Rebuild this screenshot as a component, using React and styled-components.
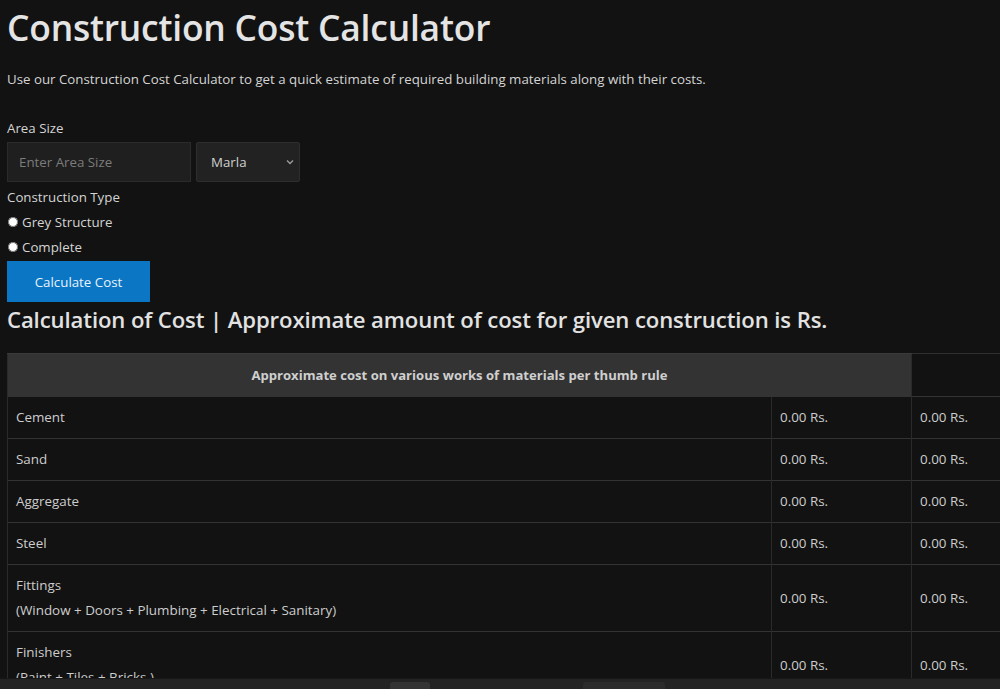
import React from "react";
import styled, { createGlobalStyle } from "styled-components";

const GlobalStyle = createGlobalStyle`
  html, body {
    margin: 0;
    padding: 0;
    background: #121212;
    overflow: hidden;
  }
  body {
    font-family: "Open Sans", "Noto Sans", sans-serif;
    color: #d6d6d6;
  }
`;

const Page = styled.div`
  padding: 0 0 0 7px;
  width: 1100px;
`;

const Title = styled.h1`
  margin: 5px 0 0;
  font-size: 35.4px;
  font-weight: 600;
  line-height: 44px;
  color: #e4e4e4;
  letter-spacing: -0.2px;
`;

const Intro = styled.p`
  margin: 20px 0 0;
  font-size: 13.3px;
  line-height: 20px;
  color: #d4d4d4;
`;

const Label = styled.div`
  margin-top: ${(p) => p.top || 0}px;
  font-size: 13.3px;
  line-height: 20px;
  color: #d4d4d4;
`;

const FieldRow = styled.div`
  display: flex;
  gap: 5px;
  margin-top: 4px;
`;

const TextInput = styled.input`
  box-sizing: border-box;
  width: 184px;
  height: 40px;
  padding: 0 11px;
  background: #1f1f1f;
  border: 1px solid #2b2b2b;
  color: #ddd;
  font-family: inherit;
  font-size: 13.3px;
  outline: none;

  &::placeholder {
    color: #7c7c7c;
  }
`;

const SelectWrap = styled.div`
  position: relative;
  width: 104px;
  height: 40px;
`;

const Select = styled.select`
  appearance: none;
  box-sizing: border-box;
  width: 100%;
  height: 100%;
  padding: 0 14px;
  background: #222222;
  border: 1px solid #2e2e2e;
  border-radius: 2px;
  color: #cfcfcf;
  font-family: inherit;
  font-size: 13.3px;
  outline: none;
`;

const Chevron = styled.svg`
  position: absolute;
  right: 6px;
  top: 17px;
  pointer-events: none;
`;

const RadioGroup = styled.div`
  margin-top: 2px;
`;

const RadioRow = styled.label`
  display: flex;
  align-items: center;
  height: 25px;
  font-size: 13.3px;
  color: #d4d4d4;

  input {
    margin: 0 4px 0 1px;
    width: 10px;
    height: 10px;
    accent-color: #ffffff;
  }
`;

const Button = styled.button`
  display: block;
  width: 143px;
  height: 41px;
  margin-top: 2px;
  background: #0a76c4;
  border: none;
  color: #e8f2fb;
  font-family: inherit;
  font-size: 13.3px;
  cursor: pointer;
`;

const Subtitle = styled.h3`
  margin: 2px 0 0;
  font-size: 22.1px;
  font-weight: 600;
  line-height: 30px;
  color: #e2e2e2;
  letter-spacing: -0.1px;
`;

const Table = styled.table`
  margin-top: 19px;
  border-collapse: collapse;
  width: 1050px;
  font-size: 13.4px;
  color: #cdcdcd;
`;

const HeadCell = styled.th`
  height: 42px;
  padding: 0;
  background: ${(p) => (p.empty ? "#121212" : "#333333")};
  border-top: 1px solid ${(p) => (p.empty ? "#2f2f2f" : "#3a3a3a")};
  border-left: 1px solid #2a2a2a;
  font-size: 13.1px;
  font-weight: 700;
  color: #cfcfcf;
  text-align: center;
`;

const Cell = styled.td`
  box-sizing: border-box;
  width: ${(p) => p.w || "auto"};
  padding: 8px 8px;
  line-height: 25px;
  border-top: 1px solid #333333;
  border-left: 1px solid #2a2a2a;
  vertical-align: middle;
`;

const BottomBar = styled.div`
  position: fixed;
  left: 0;
  right: 0;
  bottom: 0;
  height: 10px;
  background: #232323;
  border-top: 1px solid #171717;
`;

const BarPiece = styled.div`
  position: absolute;
  top: 3px;
  left: ${(p) => p.x}px;
  width: ${(p) => p.w}px;
  height: 7px;
  border-radius: 3px 3px 0 0;
  background: ${(p) => p.bg};
`;

const rows = [
  { name: "Cement" },
  { name: "Sand" },
  { name: "Aggregate" },
  { name: "Steel" },
  { name: "Fittings", note: "(Window + Doors + Plumbing + Electrical + Sanitary)" },
  { name: "Finishers", note: "(Paint + Tiles + Bricks )" },
];

export default function App() {
  return (
    <>
      <GlobalStyle />
      <Page>
        <Title>Construction Cost Calculator</Title>
        <Intro>
          Use our Construction Cost Calculator to get a quick estimate of required building materials along with their costs.
        </Intro>

        <Label top={29}>Area Size</Label>
        <FieldRow>
          <TextInput placeholder="Enter Area Size" />
          <SelectWrap>
            <Select defaultValue="Marla">
              <option>Marla</option>
              <option>Kanal</option>
              <option>Sq. Ft.</option>
            </Select>
            <Chevron width="8" height="6" viewBox="0 0 8 6">
              <path d="M1 1.5 L4 4.5 L7 1.5" fill="none" stroke="#9a9a9a" strokeWidth="1.4" />
            </Chevron>
          </SelectWrap>
        </FieldRow>

        <Label top={5}>Construction Type</Label>
        <RadioGroup>
          <RadioRow>
            <input type="radio" name="type" />
            Grey Structure
          </RadioRow>
          <RadioRow>
            <input type="radio" name="type" />
            Complete
          </RadioRow>
        </RadioGroup>

        <Button>Calculate Cost</Button>

        <Subtitle>Calculation of Cost | Approximate amount of cost for given construction is Rs.</Subtitle>

        <Table>
          <thead>
            <tr>
              <HeadCell colSpan={2}>Approximate cost on various works of materials per thumb rule</HeadCell>
              <HeadCell empty />
            </tr>
          </thead>
          <tbody>
            {rows.map((r) => (
              <tr key={r.name}>
                <Cell w="764px">
                  {r.name}
                  {r.note && (
                    <>
                      <br />
                      {r.note}
                    </>
                  )}
                </Cell>
                <Cell w="140px">0.00 Rs.</Cell>
                <Cell>0.00 Rs.</Cell>
              </tr>
            ))}
          </tbody>
        </Table>
      </Page>
      <BottomBar>
        <BarPiece x={390} w={40} bg="#333333" />
        <BarPiece x={583} w={82} bg="#2b2b2b" />
      </BottomBar>
    </>
  );
}
